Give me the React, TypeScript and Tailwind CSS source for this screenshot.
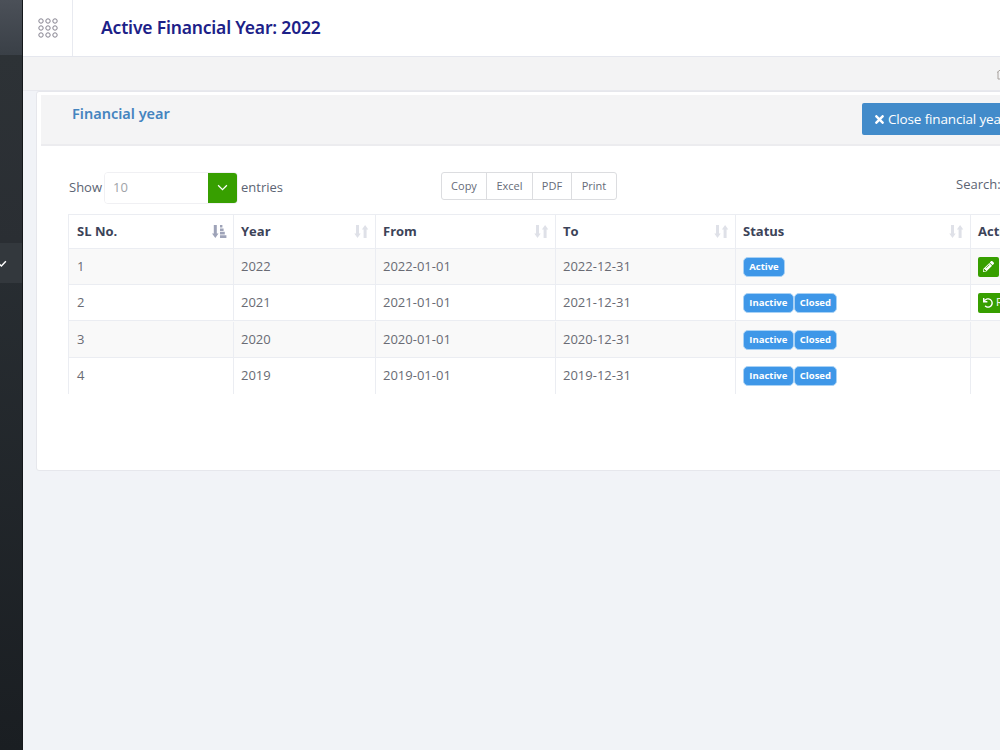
import React from "react";
import { FaTimes, FaPencilAlt, FaUndo } from "react-icons/fa";

function SortIcon({ active = false }: { active?: boolean }) {
  if (active) {
    return (
      <svg width="15" height="15" viewBox="0 0 15 15" className="shrink-0">
        <path d="M1.8 1h3v8.4h1.7L3.3 14 0 9.4h1.8z" fill="#9ea3b8" />
        <path d="M8 1h2.4v2.6H8zM8 4.4h3.6V7H8zM8 7.8h4.8v2.6H8zM8 11.2h6.4V14H8z" fill="#9ea3b8" />
      </svg>
    );
  }
  return (
    <svg width="15" height="15" viewBox="0 0 15 15" className="shrink-0">
      <path d="M2 1h3v8.4h1.7L3.5 14 .3 9.4H2z" fill="#dfe1e8" />
      <path d="M9.6 14h3V5.6h1.7L11.1 1 7.9 5.6h1.7z" fill="#dfe1e8" />
    </svg>
  );
}

function Badge({ children }: { children: React.ReactNode }) {
  return (
    <span className="inline-block h-[20px] rounded-[5px] bg-[#3e97e8] border border-[#a9d2f5] px-[5.25px] text-[9.5px] leading-[18px] font-bold text-white">
      {children}
    </span>
  );
}

const rows = [
  { n: "1", y: "2022", bg: "bg-[#f9f9f9]", h: "h-[36px]", active: true },
  { n: "2", y: "2021", bg: "bg-white", h: "h-[36px]", active: false, redo: true },
  { n: "3", y: "2020", bg: "bg-[#f9f9f9] pt-[1px]", h: "h-[37px]", active: false },
  { n: "4", y: "2019", bg: "bg-white", h: "h-[36px]", active: false },
];

const cols = ["w-[165px]", "w-[142px]", "w-[180px]", "w-[180px]", "w-[235px]", "w-[80px]"];

function Head({ label, w, active, last }: { label: string; w: string; active?: boolean; last?: boolean }) {
  return (
    <div className={`${w} shrink-0 flex items-center justify-between ${active ? "pl-[8px]" : "pl-[7px]"} pr-[6px] ${last ? "" : "border-r"} border-[#ebedf2]`}>
      <span className="text-[13px] font-bold text-[#3c4358]">{label}</span>
      {!last && <SortIcon active={active} />}
    </div>
  );
}

export default function App() {
  return (
    <div className="w-[1000px] h-[750px] overflow-hidden flex bg-[#f1f3f7] font-['Open_Sans',sans-serif]">
      <aside className="w-[23px] shrink-0 flex flex-col bg-gradient-to-b from-[#30363b] to-[#1a1e22] border-r border-[#15181b]">
        <div className="h-[55px] bg-gradient-to-b from-[#4b5058] to-[#3a4047]" />
        <div className="h-[188px] bg-gradient-to-b from-[#2d3236] to-[#2a2e33]" />
        <div className="h-[40px] bg-[#33383d] flex items-center">
          <svg width="9" height="9" viewBox="0 0 8 8" className="ml-[-2px]">
            <path d="M1 4.5 3 6.2 7 2" stroke="#fff" strokeWidth="1.3" fill="none" />
          </svg>
        </div>
      </aside>

      <main className="flex-1 min-w-0 flex flex-col">
        <header className="h-[57px] shrink-0 bg-white border-b border-[#e5e7ee] flex items-center">
          <div className="w-[50px] h-full border-r border-[#e8eaf0] flex items-center justify-center">
            <svg width="20" height="20" viewBox="0 0 20 20" fill="none" stroke="#85828f" strokeWidth="1">
              {[3, 10, 17].map((y) =>
                [3, 10, 17].map((x) => <circle key={`${x}-${y}`} cx={x} cy={y} r="2.2" />)
              )}
            </svg>
          </div>
          <h1 className="ml-[28px] mt-[-2px] text-[17.5px] tracking-[-0.18px] font-semibold text-[#1c2188] font-['Noto_Sans',sans-serif]">
            Active Financial Year: 2022
          </h1>
        </header>

        <div className="h-[34px] shrink-0 bg-[#f3f3f4] border-b border-[#e8e9ee] flex justify-end items-center overflow-hidden">
          <svg width="12" height="14" viewBox="0 0 12 14" className="mr-[-8px] shrink-0" fill="none" stroke="#a8a29e" strokeWidth="1">
            <path d="M1 5.5 6 1.5l5 4M2 5v7h8V5" />
          </svg>
        </div>

        <div className="w-[1100px] ml-[13px] h-[380px] bg-white rounded-[3px] border border-[#e6e7ec] pt-[3px] pl-[4px] shrink-0">
          <div className="h-[51px] bg-[#f4f4f5] border-b-2 border-[#ececef] flex items-start pl-[31px] relative">
            <h2 className="mt-[8px] text-[14.5px] font-semibold text-[#4584bf] font-['Noto_Sans',sans-serif]">Financial year</h2>
            <button className="absolute left-[821px] top-[8px] h-[32px] w-[170px] rounded-[2px] bg-[#428bca] text-white text-[13.5px] tracking-[-0.15px] flex items-center pl-[11px] gap-[2px] whitespace-nowrap">
              <FaTimes className="w-[13px] h-[13px]" />
              Close financial year
            </button>
          </div>

          <div className="pl-[28px] pt-[25px]">
            <div className="h-[33px] flex items-center text-[13px] text-[#5c6473] relative">
              <span className="mr-[2px]">Show</span>
              <div className="w-[134px] h-[32px] flex border border-[#f0f0f3] rounded-[4px] overflow-hidden">
                <div className="flex-1 pl-[8px] flex items-center text-[13px] text-[#a0a3a8] bg-white">10</div>
                <div className="w-[29px] bg-[#379f00] flex items-center justify-center">
                  <svg width="11" height="7" viewBox="0 0 10 6" fill="none" stroke="#fff" strokeWidth="1.1">
                    <path d="M1 1l4 4 4-4" />
                  </svg>
                </div>
              </div>
              <span className="ml-[3px]">entries</span>

              <div className="absolute left-[372px] top-[1px] h-[28px] flex border border-[#dcdde0] rounded-[3px] text-[11px] text-[#666b78] bg-white">
                <span className="w-[45px] flex items-center justify-center border-r border-[#dcdde0]">Copy</span>
                <span className="w-[46px] flex items-center justify-center border-r border-[#dcdde0]">Excel</span>
                <span className="w-[39px] flex items-center justify-center border-r border-[#dcdde0]">PDF</span>
                <span className="w-[44px] flex items-center justify-center">Print</span>
              </div>

              <span className="absolute left-[887px] top-[4px] text-[13px] text-[#5c6473]">Search:</span>
            </div>

            <div className="mt-[10px] ml-[-1px] w-[982px] border-t border-l border-[#ebedf2]">
              <div className="h-[34px] flex border-b border-[#ebedf2]">
                <Head label="SL No." w={cols[0]} active />
                <Head label="Year" w={cols[1]} />
                <Head label="From" w={cols[2]} />
                <Head label="To" w={cols[3]} />
                <Head label="Status" w={cols[4]} />
                <Head label="Action" w={cols[5]} last />
              </div>
              {rows.map((r, i) => (
                <div key={r.n} className={`${r.h} ${r.bg} flex text-[13px] text-[#696b74] ${i < 3 ? "border-b border-[#ebedf2]" : ""}`}>
                  <div className={`${cols[0]} shrink-0 pl-[8px] flex items-center border-r border-[#ebedf2]`}>{r.n}</div>
                  <div className={`${cols[1]} shrink-0 pl-[7px] flex items-center border-r border-[#ebedf2]`}>{r.y}</div>
                  <div className={`${cols[2]} shrink-0 pl-[7px] flex items-center border-r border-[#ebedf2]`}>{r.y}-01-01</div>
                  <div className={`${cols[3]} shrink-0 pl-[7px] flex items-center border-r border-[#ebedf2]`}>{r.y}-12-31</div>
                  <div className={`${cols[4]} shrink-0 pl-[7px] flex items-center border-r border-[#ebedf2]`}>
                    {r.active ? (
                      <Badge>Active</Badge>
                    ) : (
                      <>
                        <Badge>Inactive</Badge>
                        <Badge>Closed</Badge>
                      </>
                    )}
                  </div>
                  <div className={`${cols[5]} shrink-0 pl-[7px] flex items-center`}>
                    {r.active && (
                      <span className="w-[21px] h-[20px] rounded-[2px] bg-[#379f00] flex items-center justify-center text-white">
                        <FaPencilAlt className="w-[11px] h-[11px]" />
                      </span>
                    )}
                    {r.redo && (
                      <span className="w-[60px] h-[20px] rounded-[2px] bg-[#379f00] flex items-center pl-[5px] gap-[3px] text-[11px] text-white">
                        <FaUndo className="w-[10px] h-[10px]" />
                        Re
                      </span>
                    )}
                  </div>
                </div>
              ))}
            </div>
          </div>
        </div>
      </main>
    </div>
  );
}
